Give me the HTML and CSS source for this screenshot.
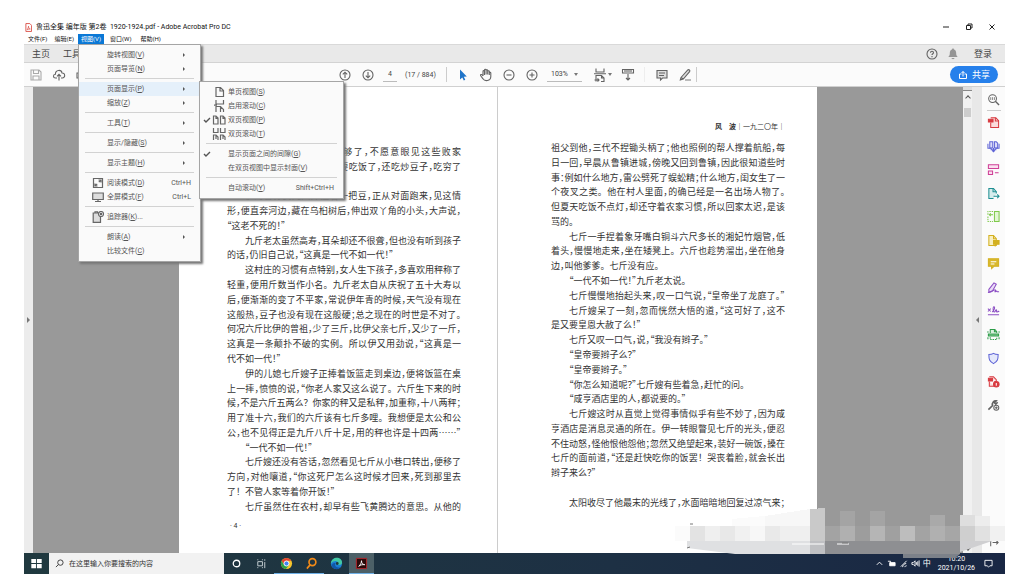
FILE: index.html
```html
<!DOCTYPE html>
<html lang="zh-CN">
<head>
<meta charset="utf-8">
<title>鲁迅全集 编年版 第2卷 1920-1924.pdf - Adobe Acrobat Pro DC</title>
<link rel="stylesheet" href="styles.css">
</head>
<body>
<div class="desktop">
  <header class="titlebar">
    <svg class="app-icon" viewBox="0 0 8 10"><path d="M1 .5h4.500l2 2v7H1z" fill="#fff" stroke="#d9483f"/><path d="M2.500 7.500c1-1 1.500-3 1.500-4 0 2 1 3 2 3.200-1.200 0-2.500.3-3.500.8z" fill="none" stroke="#d9483f" stroke-width=".8"/></svg>
    <h1>鲁迅全集 编年版 第2卷&nbsp; 1920-1924.pdf - Adobe Acrobat Pro DC</h1>
    <div class="window-controls">
      <button aria-label="最小化"><svg viewBox="0 0 8 8"><path d="M1 4h6"/></svg></button>
      <button aria-label="还原"><svg viewBox="0 0 8 8"><path d="M1.500 2.500h4v4h-4zM3 2V1h4v4H6"/></svg></button>
      <button aria-label="关闭"><svg viewBox="0 0 8 8"><path d="M1.500 1.500l5 5M6.500 1.500l-5 5"/></svg></button>
    </div>
  </header>

  <nav class="menubar">
    <button>文件(F)</button>
    <button>编辑(E)</button>
    <div class="menu-host">
      <button class="active">视图(V)</button>
      <div class="menu main-menu">
        <button class="item"><span>旋转视图(<u>V</u>)</span><i class="more"></i></button>
        <button class="item"><span>页面导览(<u>N</u>)</span><i class="more"></i></button>
        <hr>
        <div class="sub-host">
          <button class="item hover"><span>页面显示(<u>P</u>)</span><i class="more"></i></button>
          <div class="menu sub-menu">
            <button class="item"><svg class="mi" viewBox="0 0 14 12"><path d="M4 1.500h4.500l3 3v6H4zM8 1.500v3.500h3.500"/></svg><span>单页视图(<u>S</u>)</span></button>
            <button class="item"><svg class="mi" viewBox="0 0 14 12"><path d="M4 0v4h7.500V0M4 12V6.500h4.500l3 3V12M8.500 6.500V12M2 5.200h3"/></svg><span>启用滚动(<u>C</u>)</span></button>
            <button class="item"><svg class="tick" viewBox="0 0 8 8"><path d="M1 4l2 2 4-4"/></svg><svg class="mi" viewBox="0 0 14 12"><path d="M1.500 2H4l2 2v6H1.500zM4 2v2.500h2M8.500 2H11l2 2v6H8.500zM11 2v2.500h2"/></svg><span>双页视图(<u>P</u>)</span></button>
            <button class="item"><svg class="mi" viewBox="0 0 14 12"><path d="M1.500 0v4.500H6V0M8.500 0v4.500H13V0M1.500 12V7H4l2 2v3M4 7v4M8.500 12V7H11l2 2v3M11 7v4"/></svg><span>双页滚动(<u>T</u>)</span></button>
            <hr>
            <button class="item"><svg class="tick" viewBox="0 0 8 8"><path d="M1 4l2 2 4-4"/></svg><span>显示页面之间的间隙(<u>G</u>)</span></button>
            <button class="item"><span>在双页视图中显示封面(<u>V</u>)</span></button>
            <hr>
            <button class="item"><span>自动滚动(<u>Y</u>)</span><kbd>Shift+Ctrl+H</kbd></button>
          </div>
        </div>
        <button class="item"><span>缩放(<u>Z</u>)</span><i class="more"></i></button>
        <hr>
        <button class="item"><span>工具(<u>T</u>)</span><i class="more"></i></button>
        <hr>
        <button class="item"><span>显示/隐藏(<u>S</u>)</span><i class="more"></i></button>
        <hr>
        <button class="item"><span>显示主题(<u>H</u>)</span><i class="more"></i></button>
        <hr>
        <button class="item"><svg class="mi" viewBox="0 0 12 12"><path d="M1.500 1.500h9v9h-9zM6.500 3H9v2.500M9 3L6.800 5.200M5.500 9H3V6.500M3 9l2.200-2.200"/></svg><span>阅读模式(<u>D</u>)</span><kbd>Ctrl+H</kbd></button>
        <button class="item"><svg class="mi" viewBox="0 0 12 12"><path d="M.7 2h10.600v6.500H.7z" fill="#ddd"/><path d="M3 10.500h6M6 8.500v2"/></svg><span>全屏模式(<u>F</u>)</span><kbd>Ctrl+L</kbd></button>
        <hr>
        <button class="item"><svg class="mi" viewBox="0 0 12 12"><path d="M1.200 2h7.300v9.300H1.200z" fill="#ddd"/><path d="M3 2V.8h2.500V2"/><circle cx="9" cy="3" r="2.500" fill="#fafafa"/><circle cx="9" cy="3" r=".7"/></svg><span>追踪器(<u>K</u>)...</span></button>
        <hr>
        <button class="item"><span>朗读(<u>A</u>)</span><i class="more"></i></button>
        <button class="item"><span>比较文件(<u>C</u>)</span></button>
      </div>
    </div>
    <button>窗口(W)</button>
    <button>帮助(H)</button>
  </nav>

  <div class="tabbar">
    <button>主页</button>
    <button>工具</button>
    <div class="account">
      <button aria-label="帮助"><svg class="ic" viewBox="0 0 14 14"><circle cx="7" cy="7" r="5"/><path d="M5.500 5.800c0-2 3-2 3 0 0 1-1.500 1-1.500 2.200M7 9v1.200"/></svg></button>
      <button aria-label="通知"><svg class="ic bell" viewBox="0 0 14 14"><path d="M7 1.500c.7 0 1 .5 1 1 1.700.6 2.200 2 2.200 4 0 1.800.6 2.500 1.500 3.500H2.300c.9-1 1.500-1.700 1.500-3.500 0-2 .5-3.400 2.200-4 0-.5.3-1 1-1zM5.500 11h3c0 1.500-3 1.500-3 0z"/></svg></button>
      <button class="login">登录</button>
    </div>
  </div>

  <div class="toolbar">
    <div class="file-tools">
      <button aria-label="保存"><svg class="ic pale" viewBox="0 0 14 14"><path d="M2 2h8l2 2v8H2zM4.500 2v3.500h5V2M4 12V8h6v4"/></svg></button>
      <button aria-label="上传"><svg class="ic" viewBox="0 0 14 14"><path d="M5 10H3.500C.8 10 .8 6.300 3.400 6.200 3.400 1.500 9.500 1.300 10 5c3.500-.2 3.500 5 .3 5H9M7 12.500V6.500M5 8.300l2-2 2 2"/></svg></button>
      <button aria-label="打印"><svg class="ic" viewBox="0 0 14 14"><path d="M3.500 5V2h7v3M3.500 10H2V5h10v5h-1.500M3.500 8h7v4h-7z"/></svg></button>
    </div>
    <div class="page-tools">
      <button aria-label="上一页"><svg class="ic" viewBox="0 0 14 14"><circle cx="7" cy="7" r="5"/><path d="M7 10V4.200M4.800 6.400L7 4.200l2.200 2.200"/></svg></button>
      <button aria-label="下一页"><svg class="ic" viewBox="0 0 14 14"><circle cx="7" cy="7" r="5"/><path d="M7 4v5.800M4.800 7.600L7 9.800l2.200-2.200"/></svg></button>
      <input class="page-no" aria-label="页码" value="4">
      <span class="page-count">(17 / 884)</span>
      <span class="sep"></span>
      <button aria-label="选择"><svg class="ic" viewBox="0 0 14 14"><path d="M4 1.500v10l2.300-2 1.500 3 1.500-.8-1.500-2.900 3-.3z" fill="#1f74c9" stroke="none"/></svg></button>
      <button aria-label="抓手"><svg class="ic" viewBox="0 0 14 14"><path d="M4 8V3.500c0-1.200 1.500-1.200 1.500 0V7M5.500 3V2.200c0-1.200 1.600-1.200 1.600 0V6.500M7.100 2.600c0-1.200 1.600-1.200 1.600 0v4M8.700 3.600c0-1.200 1.600-1.200 1.600 0V7M10.300 5c0-1 1.500-1 1.500 0v3.500c0 5-6.300 5-7.800 2.300L1.700 7.800C1 6.600 2.500 6 3.200 7L4 8"/></svg></button>
      <button aria-label="缩小"><svg class="ic" viewBox="0 0 14 14"><circle cx="7" cy="7" r="5"/><path d="M4.500 7h5"/></svg></button>
      <button aria-label="放大"><svg class="ic" viewBox="0 0 14 14"><circle cx="7" cy="7" r="5"/><path d="M4.500 7h5M7 4.500v5"/></svg></button>
      <label class="zoom"><select aria-label="缩放比例"><option>103%</option></select><i class="caret"></i></label>
      <button class="fit" aria-label="适合宽度"><svg class="ic" viewBox="0 0 14 14"><path d="M3 .5V4h8V.5M1 5.700h12M3 13.500V7.500h5.500L11 10v3.500H8M8.500 7.500V10H11M1.500 12H6M4.500 10.500L6 12l-1.500 1.500"/></svg><i class="caret"></i></button>
      <button aria-label="滚动"><svg class="ic" viewBox="0 0 14 14"><path d="M1.500 1.500h11v3.500h-11zM4 2v2M6 2v2M8 2v2M10 2v2M7 6v6M5 10l2 2 2-2"/></svg></button>
      <span class="sep faint"></span>
      <button aria-label="注释"><svg class="ic" viewBox="0 0 14 14"><path d="M2 2.500h10V10H7.500L5.500 12v-2H2z" fill="#ddd"/><path d="M4 5h6M4 7.500h5"/></svg></button>
      <button aria-label="荧光笔"><svg class="ic" viewBox="0 0 14 14"><path d="M7 12h6" stroke="#bbb" stroke-width="2"/><path d="M3 9.500L9.800 2c1-1 2.700.5 1.800 1.600L5.300 11l-3 1zM3 9.500L5.300 11" fill="#ddd"/></svg></button>
      <span class="sep"></span>
    </div>
    <button class="share"><svg viewBox="0 0 10 10"><path d="M3.500 4H1.500v4.500h7V4h-2M5 6.500v-5M3.500 3L5 1.500 6.500 3"/></svg>共享</button>
  </div>

  <main class="workspace">
    <button class="rail-toggle" aria-label="展开导览窗格"><i class="tri right"></i></button>
    <div class="viewer">
      <article class="page left">
        <div class="page-head"></div>
        <div class="lines">
          <p class="in">我活到七十九岁了，活够了，不愿意眼见这些败家</p>
          <p>相，——还是死的好。立刻就要吃饭了，还吃炒豆子，吃穷了</p>
          <p class="end">一家子！”</p>
          <p class="in">伊的曾孙女儿六斤捏着一把豆，正从对面跑来，见这情</p>
          <p>形，便直奔河边，藏在乌桕树后，伸出双丫角的小头，大声说，</p>
          <p class="end">“这老不死的！”</p>
          <p class="in">九斤老太虽然高寿，耳朵却还不很聋，但也没有听到孩子</p>
          <p class="end">的话，仍旧自己说，“这真是一代不如一代！”</p>
          <p class="in">这村庄的习惯有点特别，女人生下孩子，多喜欢用秤称了</p>
          <p>轻重，便用斤数当作小名<span class="stop">。</span>九斤老太自从庆祝了五十大寿以</p>
          <p>后，便渐渐的变了不平家，常说伊年青的时候，天气没有现在</p>
          <p>这般热，豆子也没有现在这般硬；总之现在的时世是不对了。</p>
          <p>何况六斤比伊的曾祖，少了三斤，比伊父亲七斤，又少了一斤，</p>
          <p>这真是一条颠扑不破的实例<span class="stop">。</span>所以伊又用劲说，“这真是一</p>
          <p class="end">代不如一代！”</p>
          <p class="in">伊的儿媳七斤嫂子正捧着饭篮走到桌边，便将饭篮在桌</p>
          <p>上一摔，愤愤的说，“你老人家又这么说了<span class="stop">。</span>六斤生下来的时</p>
          <p>候，不是六斤五两么<span class="stop">？</span>你家的秤又是私秤，加重称，十八两秤；</p>
          <p>用了准十六，我们的六斤该有七斤多哩<span class="stop">。</span>我想便是太公和公</p>
          <p>公，也不见得正是九斤八斤十足，用的秤也许是十四两……”</p>
          <p class="in end">“一代不如一代！”</p>
          <p class="in">七斤嫂还没有答话，忽然看见七斤从小巷口转出，便移了</p>
          <p>方向，对他嚷道，“你这死尸怎么这时候才回来，死到那里去</p>
          <p class="end">了<span class="stop">！</span>不管人家等着你开饭！”</p>
          <p class="in">七斤虽然住在农村，却早有些飞黄腾达的意思<span class="stop">。</span>从他的</p>
        </div>
        <div class="page-foot">· 4 ·</div>
      </article>
      <article class="page right">
        <div class="page-head"><b>风　波</b>｜一九二〇年｜</div>
        <div class="lines">
          <p>祖父到他，三代不捏锄头柄了；他也照例的帮人撑着航船，每</p>
          <p>日一回，早晨从鲁镇进城，傍晚又回到鲁镇，因此很知道些时</p>
          <p>事：例如什么地方，雷公劈死了蜈蚣精；什么地方，闺女生了一</p>
          <p>个夜叉之类<span class="stop">。</span>他在村人里面，的确已经是一名出场人物了。</p>
          <p>但夏天吃饭不点灯，却还守着农家习惯，所以回家太迟，是该</p>
          <p class="end">骂的。</p>
          <p class="in">七斤一手捏着象牙嘴白铜斗六尺多长的湘妃竹烟管，低</p>
          <p>着头，慢慢地走来，坐在矮凳上<span class="stop">。</span>六斤也趁势溜出，坐在他身</p>
          <p class="end">边，叫他爹爹<span class="stop">。</span>七斤没有应。</p>
          <p class="in end">“一代不如一代！”九斤老太说。</p>
          <p class="in">七斤慢慢地抬起头来，叹一口气说，“皇帝坐了龙庭了。”</p>
          <p class="in">七斤嫂呆了一刻，忽而恍然大悟的道，“这可好了，这不</p>
          <p class="end">是又要皇恩大赦了么！”</p>
          <p class="in end">七斤又叹一口气，说，“我没有辫子。”</p>
          <p class="in end">“皇帝要辫子么？”</p>
          <p class="in end">“皇帝要辫子。”</p>
          <p class="in end">“你怎么知道呢？”七斤嫂有些着急，赶忙的问。</p>
          <p class="in end">“咸亨酒店里的人，都说要的。”</p>
          <p class="in">七斤嫂这时从直觉上觉得事情似乎有些不妙了，因为咸</p>
          <p>亨酒店是消息灵通的所在<span class="stop">。</span>伊一转眼瞥见七斤的光头，便忍</p>
          <p>不住动怒，怪他恨他怨他；忽然又绝望起来，装好一碗饭，搡在</p>
          <p>七斤的面前道，“还是赶快吃你的饭罢<span class="stop">！</span>哭丧着脸，就会长出</p>
          <p class="end">辫子来么？”</p>
          <p class="end">&nbsp;</p>
          <p class="in">太阳收尽了他最末的光线了，水面暗暗地回复过凉气来；</p>
        </div>
        <div class="page-foot"></div>
      </article>
    </div>
    <div class="scrollbar">
      <i class="split"></i><i class="chev up"></i><i class="thumb"></i><i class="chev down"></i>
    </div>
    <button class="rail-toggle wide" aria-label="折叠工具窗格"><i class="tri left"></i></button>
    <aside class="tools">
      <button aria-label="搜索工具"><svg class="ic" viewBox="0 0 14 14"><circle cx="6" cy="6" r="4.200"/><path d="M9 9l4 4" stroke-width="1.500"/><path d="M4 4.500v3M6 4.500v3M8 4.500v3" stroke-width=".8"/></svg></button>
      <hr>
      <div class="tool-list">
        <button aria-label="创建 PDF"><svg class="ic red" viewBox="0 0 14 14"><path d="M4 7v5.300h8.500V5L9.500 2H4" fill="#fbdcdc"/><path d="M9 2v3.500h3.500"/><path d="M1.500 3.500h5v3h-5z" fill="#d83b41"/></svg></button>
        <button aria-label="合并文件"><svg class="ic blue" viewBox="0 0 14 14"><path d="M3 2h3.200v6.500H3zM8 2h2l1.500 1.500v5H8z" fill="#dcdcf8"/><path d="M1 4v5h3.500v1.500h5V9H13V4M7 8.500v4M5.500 11.200L7 12.700l1.500-1.500"/></svg></button>
        <button aria-label="组织页面"><svg class="ic pink" viewBox="0 0 14 14"><path d="M1.500 2h11v4h-11zM1.500 8.500H6v4H1.500z" fill="#fae0ef"/><path d="M8.500 10.500h4"/></svg></button>
        <button aria-label="导出 PDF"><svg class="ic teal" viewBox="0 0 14 14"><path d="M10 7V5L7 1.500H2v11h5" fill="#d6eded"/><path d="M6.500 1.500V5H10M7 10h6M11 8l2 2-2 2"/></svg></button>
        <button aria-label="比较文件"><svg class="ic green" viewBox="0 0 14 14"><path d="M8 1.500h5v11H8z" fill="#e2f7d3"/><path d="M6.500 1.500H1v4M1 7v5.500h5.500" stroke-dasharray="1.500 1"/><path d="M6.500 5H2.500M4 3.500L2.500 5 4 6.500"/></svg></button>
        <button aria-label="编辑 PDF"><svg class="ic gold" viewBox="0 0 14 14"><path d="M2 1.500h5L10 5v7.500H2z" fill="#f8efc1"/><path d="M7 1.500V5h3"/><path d="M7 7h6v4h-3l-1 1.500V11H7z" fill="#d3b020"/></svg></button>
        <button aria-label="注释"><svg class="ic gold" viewBox="0 0 14 14"><path d="M1.500 2h11v8H7.500L5 12.500V10H1.500z" fill="#d9b82d"/><path d="M4 5h6M4 7.500h4" stroke="#fff"/></svg></button>
        <button aria-label="填写和签名"><svg class="ic violet" viewBox="0 0 14 14"><path d="M2 9l5.500-7 2.500 1.500-4 7L2 12z" fill="#eadcf8"/><path d="M1 12.500c5 0 7-4 8-3s-1.500 2.500 0 2 1-1.500 2 0h2"/></svg></button>
        <button aria-label="签名"><svg class="ic violet" viewBox="0 0 14 14"><path d="M1 4l3 3M4 4L1 7M5.500 7.500C8 6 9 2 7.500 2S6.500 8 8 7.500 9 5 10 5s-.5 3 1 2.500S12 6 13 7.500M1 10.500h12"/></svg></button>
        <button aria-label="扫描"><svg class="ic leaf" viewBox="0 0 14 14"><path d="M3.500 5.500v-4h5L10.500 4v1.500" fill="#d9f1df"/><path d="M8 1.500V4h2.500"/><path d="M1.500 6.500h11v2h-11z" fill="#7cc98e"/><path d="M3.500 10v2.500h7V10" stroke-dasharray="1.500 1"/><path d="M1 3.500V5M13 3.500V5M1 10v2M13 10v2"/></svg></button>
        <button aria-label="保护"><svg class="ic blue" viewBox="0 0 14 14"><path d="M7 1.500c1.500 1 3 1.300 5 1.300 0 5-.5 7.500-5 9.700-4.500-2.200-5-4.700-5-9.700 2 0 3.500-.3 5-1.300z" fill="#e4e8fb"/></svg></button>
        <button aria-label="压缩 PDF"><svg class="ic red" viewBox="0 0 14 14"><path d="M2.500 7v5H8M2.500 2H7l3 3v2" fill="#fbdcdc"/><path d="M1.500 3.500H6v3H1.500zM8 7h2" fill="#d83b41"/><circle cx="10" cy="10" r="3" fill="#d83b41"/><path d="M10 8.500v3" stroke="#fff"/></svg></button>
        <button aria-label="更多工具"><svg class="ic" viewBox="0 0 14 14"><path d="M1.500 11.500L6 7C5 4 7.500 1.500 10 2L8 4l1.500 1.500 2-2" stroke-width="1.700"/><circle cx="10" cy="9.500" r="2.700"/><path d="M10 8v3M8.500 9.500h3"/></svg></button>
      </div>
      <button class="collapse" aria-label="收起"><svg class="ic" viewBox="0 0 14 14"><path d="M4 3v7M6 6h6M10 4l2 2-2 2"/></svg></button>
    </aside>
  </main>

  <footer class="taskbar">
    <button class="start" aria-label="开始"><svg viewBox="0 0 10 10"><path d="M1 1.500h3.600v3.200H1zM5.300 1.500H9v3.200H5.300zM1 5.400h3.600v3.200H1zM5.300 5.400H9v3.200H5.300z" fill="#fff"/></svg></button>
    <label class="search">
      <svg viewBox="0 0 10 10"><circle cx="6" cy="4" r="3" fill="none" stroke="#333"/><path d="M3.800 6.200L1 9" stroke="#333"/></svg>
      <input aria-label="搜索" placeholder="在这里输入你要搜索的内容">
    </label>
    <button aria-label="Cortana"><svg viewBox="0 0 14 14"><circle cx="7" cy="7" r="3.500" fill="none" stroke="#fff" stroke-width="1.400"/></svg></button>
    <button aria-label="任务视图"><svg viewBox="0 0 14 14"><path d="M3 3.500v-1M8 3.500v-1M3 5h5v4.500H3zM3 11v1M8 11v1M10.500 2.500v1.500M10.500 5.500v6.500" fill="none" stroke="#ccd5d8"/></svg></button>
    <button class="open" aria-label="Chrome"><svg viewBox="0 0 14 14"><circle cx="7" cy="7" r="6" fill="#f7c52c"/><path d="M1.800 4A6 6 0 0 1 12.200 4H7L4.400 8.500z" fill="#e34133"/><path d="M1.800 4A6 6 0 0 0 6.500 13L9.600 8.500H4.400z" fill="#2ca14c"/><circle cx="7" cy="7" r="2.700" fill="#4384f3" stroke="#fff"/></svg></button>
    <button class="open" aria-label="Everything"><svg viewBox="0 0 14 14"><circle cx="8" cy="5.500" r="3.700" fill="none" stroke="#f28a18" stroke-width="1.800"/><path d="M5.500 8.500L2 12.500" stroke="#f28a18" stroke-width="1.800"/></svg></button>
    <button aria-label="Edge"><svg viewBox="0 0 14 14"><circle cx="7" cy="7" r="6" fill="#1b7fd4"/><path d="M1 7C1.500-1 13-1 13 6c0 3-4 3-4.500 1.500C9 4 5 3 1 7z" fill="#43c9a4"/><path d="M5.500 6.500c-1 4 2.500 5.500 5.500 4.500-3 4-9 2-9-2 0-2 2-3 3.500-2.500z" fill="#1257a8"/><circle cx="7.800" cy="7" r="1.500" fill="#20383e"/></svg></button>
    <button class="open current" aria-label="Acrobat"><svg viewBox="0 0 14 14"><path d="M1.500 1.500h11v11h-11z" fill="#2b0909" stroke="#b3262b"/><path d="M4 10c2-1.500 3-4 3-6 0 3 1.500 4 3.500 4.300C8 8 6 8.500 4 10z" fill="none" stroke="#fff"/></svg></button>
    <div class="tray">
      <svg viewBox="0 0 10 10"><path d="M2 6.500l3-3 3 3"/></svg>
      <svg viewBox="0 0 10 10"><path d="M3 4h6v3.500H3z" fill="#fff"/><path d="M1 2.500h3v2"/></svg>
      <svg viewBox="0 0 10 10"><path d="M2 8.500L8.500 2M4 9c0-2 2-4 4-4M6.500 9c0-1 1-1.500 2-1.500"/></svg>
      <svg viewBox="0 0 10 10"><path d="M1 4v2h1.500L4.500 8V2L2.500 4zM6 3.500v3M7.500 2.500v5M9 1.500v7"/></svg>
      <span class="ime">中</span>
      <time>10:20<br>2021/10/26</time>
      <svg class="note" viewBox="0 0 10 10"><path d="M1 1.500h8v6H6.500L5 9 3.500 7.500H1z"/></svg>
    </div>
  </footer>

  <svg class="mosaic" viewBox="0 0 333 56" aria-hidden="true">
    <g shape-rendering="crispEdges">
      <path d="M60 12L93 9V19H60z" fill="#fbfbfb"/><path d="M93 9L138 2V19H93z" fill="#f7f7f7"/>
      <path d="M138 2L153 1V19H138z" fill="#c9c9c9"/><path d="M153 4H288V19H153z" fill="#999"/>
      <path d="M168 4h15v15h-15zM198 4h15v15h-15z" fill="#a4a4a4"/><path d="M258 8h15v11h-15z" fill="#a9a9a9"/>
      <path d="M288 8h15v11h-15z" fill="#dedede"/><path d="M303 9h15v10h-15z" fill="#ededed"/>
      <path d="M3 19h15v15H3z" fill="#fbfbfb"/><path d="M18 19h15v15H18z" fill="#e3e3e3"/><path d="M33 19h15v15H33z" fill="#efefef"/><path d="M48 19h15v15H48z" fill="#e8e8e8"/><path d="M63 19h15v15H63z" fill="#f1f1f1"/><path d="M78 19h15v15H78z" fill="#f7f7f7"/><path d="M93 19h15v15H93z" fill="#e9e9e9"/><path d="M108 19h30v15h-30z" fill="#efefef"/><path d="M138 19h15v15h-15z" fill="#c9c9c9"/><path d="M153 19h15v15h-15z" fill="#a3a3a3"/><path d="M168 19h15v15h-15z" fill="#b0b0b0"/><path d="M183 19h15v15h-15z" fill="#9d9d9d"/><path d="M198 19h15v15h-15z" fill="#b5b5b5"/><path d="M213 19h15v15h-15z" fill="#a0a0a0"/><path d="M228 19h15v15h-15z" fill="#bdbdbd"/><path d="M243 19h15v15h-15z" fill="#a3a3a3"/><path d="M258 19h15v15h-15z" fill="#b0b0b0"/><path d="M273 19h15v15h-15z" fill="#a6a6a6"/><path d="M288 19h15v15h-15z" fill="#cfcfcf"/><path d="M303 19h15v15h-15z" fill="#e1e1e1"/><path d="M318 19h15v15h-15z" fill="#f1f1f1"/>
    </g>
    <path d="M15 34H138V47H63L15 41z" fill="#dfe0e2"/><path d="M138 34h15v13h-15z" fill="#bfc0c3"/><path d="M153 34H288V47H153z" fill="#8e8f92"/>
    <path d="M288 34H320L288 45z" fill="#cfcfd1"/><path d="M231 47H288L283 51H231z" fill="#7c8189"/>
    <path d="M120 37h32M165 37h12" stroke="#fff"/><path d="M18 17h3M15 41l3-1M170 36h6" stroke="#777"/>
  </svg>
</div>
</body>
</html>
```
FILE: styles.css
```css
* { box-sizing: border-box; }

body {
  margin: 0;
  background: #fff;
  color: #444;
  font: 7px/10px Roboto, "Noto Sans CJK SC", sans-serif;
}

button, input, select, kbd {
  margin: 0;
  padding: 0;
  border: 0;
  background: none;
  color: inherit;
  font: inherit;
}

svg { display: block; flex: none; }
i { display: block; flex: none; }

.desktop {
  position: relative;
  display: flex;
  flex-direction: column;
  min-height: 100vh;
  padding: 20px 25px 8px 24px;
}

.titlebar {
  display: flex;
  align-items: center;
  height: 14px;
  padding-left: 1px;
  gap: 4px;
}
.app-icon { width: 7px; height: 9px; }
.titlebar h1 { margin: 0; font-size: 7px; font-weight: 400; color: #111; white-space: nowrap; }
.window-controls { display: flex; margin-left: auto; gap: 15px; padding-right: 9px; }
.window-controls svg { width: 8px; height: 8px; fill: none; stroke: #222; }

.menubar { display: flex; height: 10px; padding-left: 1px; color: #111; font-size: 6px; }
.menubar > button, .menu-host > button { height: 10px; padding: 0 3px; white-space: nowrap; }
.menubar > button { margin-right: 1px; }
.menubar .menu-host { margin-right: 3px; }
.menubar .menu-host ~ button { margin-right: 3px; }
.menu-host { position: relative; }
.menu-host > .active { background: #0a78d6; color: #fff; }

.menu {
  position: absolute;
  z-index: 5;
  padding: 3px 0;
  background: #fafafa;
  border: 1px solid #a5a5a5;
  box-shadow: 2px 2px 2px #777;
  color: #555;
  font-size: 7px;
}
.main-menu { top: 10px; left: 0; width: 123px; }
.sub-menu { top: -1px; left: 120px; width: 145px; z-index: 6; }
.sub-host { position: relative; }
.menu .item {
  position: relative;
  display: flex;
  align-items: center;
  width: 100%;
  height: 14px;
  padding: 0 9px 0 28px;
  white-space: nowrap;
}
.menu .item.hover { background: #e5f0fa; }
.menu .item u { text-underline-offset: 1px; }
.menu hr { height: 1px; margin: 2px 6px 3px; border: 0; background: #d2d2d2; }
.menu kbd { margin-left: auto; }
.more {
  margin: 0 6px 0 auto;
  border: 2px solid transparent;
  border-left-color: #555;
  border-right: 0;
}
.mi { position: absolute; left: 13px; width: 12px; height: 12px; fill: none; stroke: #666; stroke-width: 1.2; }
.sub-menu .mi { left: 12px; width: 14px; }
.tick { position: absolute; left: 3px; width: 8px; height: 8px; fill: none; stroke: #555; stroke-width: 1.4; }

.tabbar {
  display: flex;
  align-items: center;
  height: 19px;
  padding: 0 13px 0 8px;
  gap: 13px;
  background: #e9e9e9;
  border-top: 1px solid #d9d9d9;
  border-bottom: 1px solid #d3d3d3;
  font-size: 9px;
}
.account { display: flex; align-items: center; margin-left: auto; gap: 7px; }
.account .login { padding-left: 7px; }

.ic { width: 14px; height: 14px; fill: none; stroke: #636363; stroke-width: 1.1; }
.ic.bell { fill: #959595; stroke: none; }
.ic.pale { stroke: #aaa; }
.ic.red { stroke: #d83b41; }
.ic.blue { stroke: #5f64d6; }
.ic.pink { stroke: #cf3f96; }
.ic.teal { stroke: #1f8f92; }
.ic.green { stroke: #7fc94b; }
.ic.gold { stroke: #d3b020; }
.ic.violet { stroke: #8c4fc4; }
.ic.leaf { stroke: #2c9c48; }

.toolbar {
  display: grid;
  grid-template-columns: 1fr auto 1fr;
  align-items: center;
  height: 24px;
  background: #fbfbfb;
  border-bottom: 1px solid #d0d0d0;
}
.file-tools { display: flex; gap: 9px; padding-left: 5px; }
.page-tools { display: flex; align-items: center; margin-left: 5px; }
.page-tools button { display: flex; justify-content: center; width: 23px; }
.page-no {
  width: 14px;
  height: 14px;
  margin: 0 8px 0 4px;
  border-bottom: 1px solid #bbb;
  text-align: center;
}
.page-count { width: 41px; white-space: nowrap; }
.sep { width: 1px; height: 15px; margin-right: 4px; background: #ccc; }
.sep.faint { margin: 0 5px; background: #eee; }
.zoom {
  display: flex;
  align-items: center;
  width: 35px;
  height: 14px;
  margin: 0 6px 0 4px;
  padding: 0 4px;
  border-bottom: 1px solid #bbb;
}
.zoom select { flex: 1; min-width: 0; appearance: none; }
.caret { border: 2px solid transparent; border-top: 3px solid #777; border-bottom: 0; }
.page-tools .fit { align-items: center; width: 28px; gap: 1px; }
.share {
  display: flex;
  align-items: center;
  justify-content: center;
  justify-self: end;
  width: 48px;
  height: 17px;
  margin-right: 7px;
  gap: 4px;
  border-radius: 9px;
  background: #2680eb;
  color: #fff;
  font-size: 9px;
}
.share svg { width: 10px; height: 10px; fill: none; stroke: #fff; }

.workspace { display: flex; flex: 1; }
.rail-toggle {
  display: flex;
  align-items: center;
  justify-content: center;
  width: 9px;
  background: #ececec;
}
.rail-toggle.wide { width: 10px; background: #e8e8e8; }
.tri { border: 3px solid transparent; }
.tri.right { border-left-color: #777; border-right: 0; }
.tri.left { border-right-color: #777; border-left: 0; }

.viewer { display: flex; flex: 1; justify-content: center; background: #999; }
.page {
  display: flex;
  flex: 0 0 318px;
  flex-direction: column;
  background: #fff;
  color: #333;
}
.page.left { padding: 0 36px 0 48px; border-right: 1px solid #ccc; }
.page.right { padding: 0 32px 0 53px; }
.page-head { height: 58px; }
.page.right .page-head { height: 54px; padding: 35px 0 0; text-align: right; }
.page-foot { height: 39px; padding: 7px 3px; }
.page.right .page-foot { height: 43px; }
.lines {
  display: flex;
  flex: 1;
  flex-direction: column;
  justify-content: space-between;
  font: 9px/14px "Noto Sans CJK SC", sans-serif;
  font-feature-settings: "halt";
}
.lines p { margin: 0; text-align: justify; text-align-last: justify; white-space: nowrap; }
.lines .in { padding-left: 18px; }
.lines .end { text-align-last: left; }
.stop { font-feature-settings: normal; }

.scrollbar {
  display: flex;
  flex-direction: column;
  align-items: center;
  width: 9px;
  padding-bottom: 3px;
  background: #f1f1f1;
}
.split { width: 9px; height: 4px; background: #ddd; border-bottom: 1px solid #888; }
.chev { width: 4px; height: 4px; border: solid #555; transform: rotate(45deg); }
.chev.up { margin-top: 5px; border-width: 1px 0 0 1px; }
.chev.down { margin-top: auto; border-width: 0 1px 1px 0; }
.thumb { width: 7px; height: 9px; margin-top: 8px; background: #cdcdcd; }

.tools {
  display: flex;
  flex-direction: column;
  align-items: center;
  width: 23px;
  padding-top: 6px;
  background: #fbfbfb;
}
.tools hr { width: 14px; height: 1px; margin: 4px 0 5px; border: 0; background: #ccc; }
.tools button { display: block; }
.tool-list { display: flex; flex-direction: column; justify-content: space-between; height: 296px; }
.tools .ic { width: 13px; height: 13px; }
.tools .collapse { margin-top: auto; padding-bottom: 3px; }

.taskbar {
  display: flex;
  height: 21px;
  background: linear-gradient(90deg, #20393f, #1d3044 60%, #192744);
}
.taskbar button { display: flex; align-items: center; justify-content: center; width: 25px; border-bottom: 1px solid transparent; }
.taskbar button svg { width: 13px; height: 13px; }
.taskbar .open { border-color: #6fb1e8; }
.taskbar .current { background: #4c6067; }
.search {
  display: flex;
  align-items: center;
  width: 175px;
  gap: 5px;
  padding-left: 6px;
  background: #f2f2f2;
}
.search svg { width: 9px; height: 9px; }
.search input { flex: 1; min-width: 0; outline: 0; }
.search input::placeholder { color: #333; opacity: 1; }
.tray { display: flex; align-items: center; margin-left: auto; padding-right: 12px; gap: 3px; color: #fff; }
.tray svg { width: 9px; height: 9px; fill: none; stroke: #fff; }
.tray time { text-align: center; margin: 0 6px 0 4px; line-height: 9px; }
.tray .ime { font-size: 8px; }

.mosaic { position: absolute; right: 25px; bottom: 19px; width: 333px; height: 56px; }
```
